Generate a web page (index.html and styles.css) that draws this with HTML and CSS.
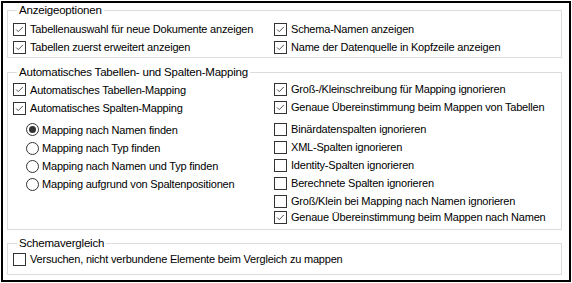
FILE: index.html
```html
<!DOCTYPE html>
<html lang="de">
<head>
    <meta charset="UTF-8">
    <title>Optionen</title>
    <link rel="stylesheet" href="styles.css">
</head>
<body>

<div class="frame">

    <!-- Anzeigeoptionen -->
    <fieldset class="group group-display">
        <legend>Anzeigeoptionen</legend>
        <div class="cols">
            <div class="col col-left">
                <div class="opt"><span class="cb on"><svg viewBox="0 0 13 13"><polyline points="2.5,6.5 5,9 10.5,3.5"/></svg></span>Tabellenauswahl für neue Dokumente anzeigen</div>
                <div class="opt"><span class="cb on"><svg viewBox="0 0 13 13"><polyline points="2.5,6.5 5,9 10.5,3.5"/></svg></span>Tabellen zuerst erweitert anzeigen</div>
            </div>
            <div class="col col-right">
                <div class="opt"><span class="cb on"><svg viewBox="0 0 13 13"><polyline points="2.5,6.5 5,9 10.5,3.5"/></svg></span>Schema-Namen anzeigen</div>
                <div class="opt"><span class="cb on"><svg viewBox="0 0 13 13"><polyline points="2.5,6.5 5,9 10.5,3.5"/></svg></span>Name der Datenquelle in Kopfzeile anzeigen</div>
            </div>
        </div>
    </fieldset>

    <!-- Mapping -->
    <fieldset class="group group-mapping">
        <legend>Automatisches Tabellen- und Spalten-Mapping</legend>
        <div class="cols">
            <div class="col col-left">
                <div class="opt"><span class="cb on"><svg viewBox="0 0 13 13"><polyline points="2.5,6.5 5,9 10.5,3.5"/></svg></span>Automatisches Tabellen-Mapping</div>
                <div class="opt"><span class="cb on"><svg viewBox="0 0 13 13"><polyline points="2.5,6.5 5,9 10.5,3.5"/></svg></span>Automatisches Spalten-Mapping</div>
                <div class="radios">
                    <div class="opt"><span class="rb on"></span>Mapping nach Namen finden</div>
                    <div class="opt"><span class="rb"></span>Mapping nach Typ finden</div>
                    <div class="opt"><span class="rb"></span>Mapping nach Namen und Typ finden</div>
                    <div class="opt"><span class="rb"></span>Mapping aufgrund von Spaltenpositionen</div>
                </div>
            </div>
            <div class="col col-right">
                <div class="opt"><span class="cb on"><svg viewBox="0 0 13 13"><polyline points="2.5,6.5 5,9 10.5,3.5"/></svg></span>Groß-/Kleinschreibung für Mapping ignorieren</div>
                <div class="opt"><span class="cb on"><svg viewBox="0 0 13 13"><polyline points="2.5,6.5 5,9 10.5,3.5"/></svg></span>Genaue Übereinstimmung beim Mappen von Tabellen</div>
                <div class="opt gap-top"><span class="cb"></span>Binärdatenspalten ignorieren</div>
                <div class="opt"><span class="cb"></span>XML-Spalten ignorieren</div>
                <div class="opt"><span class="cb"></span>Identity-Spalten ignorieren</div>
                <div class="opt"><span class="cb"></span>Berechnete Spalten ignorieren</div>
                <div class="opt"><span class="cb"></span>Groß/Klein bei Mapping nach Namen ignorieren</div>
                <div class="opt tight"><span class="cb on"><svg viewBox="0 0 13 13"><polyline points="2.5,6.5 5,9 10.5,3.5"/></svg></span>Genaue Übereinstimmung beim Mappen nach Namen</div>
            </div>
        </div>
    </fieldset>

    <!-- Schemavergleich -->
    <fieldset class="group group-schema">
        <legend>Schemavergleich</legend>
        <div class="opt"><span class="cb"></span>Versuchen, nicht verbundene Elemente beim Vergleich zu mappen</div>
    </fieldset>

</div>

</body>
</html>
```

FILE: styles.css
```css
* {
    box-sizing: border-box;
}

body {
    margin: 0;
    background-color: #ffffff;
    color: #000;
    font-family: "Liberation Sans", Arial, sans-serif;
    font-size: 11px;
    letter-spacing: -0.2px;
}

.frame {
    width: 570px;
    height: 281px;
    margin: 1px 0 0 1px;
    border: 2px solid #000;
    padding: 0 7px 0 4px;
}

/* Gruppenrahmen */
.group {
    margin: 0;
    border: 1px solid #dcdcdc;
    padding: 1px 0 1px 5px;
    min-width: 0;
}

.group legend {
    padding: 0 2px;
    margin-left: 4px;
    line-height: 14px;
    font-size: 11.5px;
}

.group-display {
    padding-top: 3px;
}

.group-mapping {
    margin-top: 7px;
    padding-bottom: 3px;
}

.group-schema {
    margin-top: 6px;
    padding-top: 0;
    padding-bottom: 6px;
}

.cols {
    display: flex;
}

.col-left {
    width: 261px;
    flex-shrink: 0;
}

.opt {
    display: flex;
    align-items: center;
    height: 18px;
    white-space: nowrap;
}

.group-mapping .col-left .opt:first-child {
    height: 19px;
}

.radios {
    margin-top: 3px;
    padding-left: 13px;
}

.gap-top {
    margin-top: 4px;
}

.tight {
    margin-top: -2px;
}

/* Kontrollkästchen */
.cb {
    width: 13px;
    height: 13px;
    border: 1px solid #333;
    background: #fff;
    margin-right: 4px;
    flex-shrink: 0;
    display: flex;
}

.cb svg {
    width: 11px;
    height: 11px;
    fill: none;
    stroke: #333;
    stroke-width: 1;
}

/* Optionsfelder */
.rb {
    width: 13px;
    height: 13px;
    border: 1px solid #333;
    border-radius: 50%;
    background: #fff;
    margin-right: 3px;
    flex-shrink: 0;
    display: flex;
    align-items: center;
    justify-content: center;
}

.rb.on::after {
    content: "";
    width: 7px;
    height: 7px;
    border-radius: 50%;
    background: #333;
}
```
